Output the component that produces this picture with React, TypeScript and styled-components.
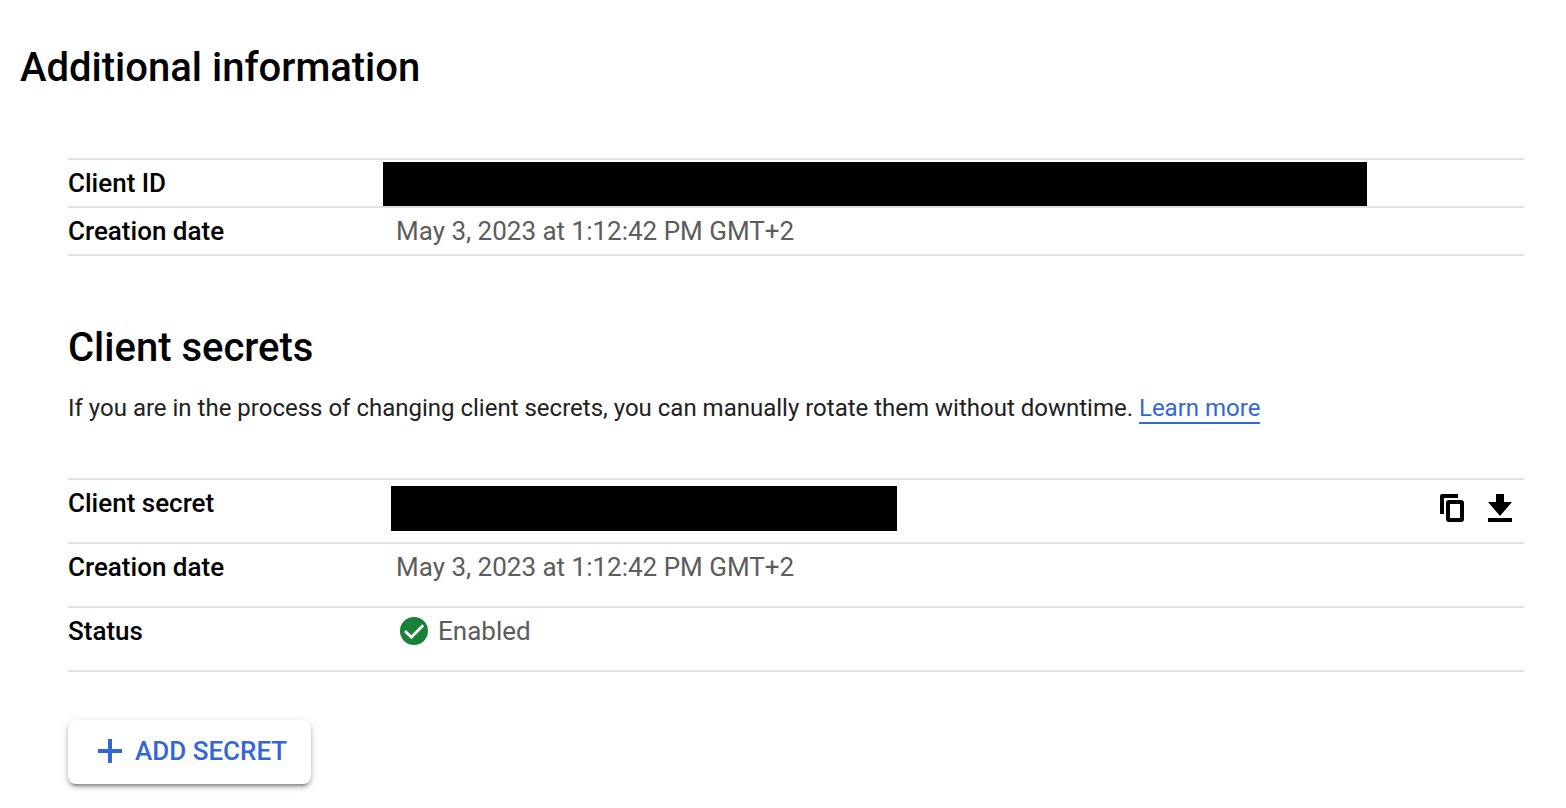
import React from "react";
import styled, { createGlobalStyle } from "styled-components";

const GlobalStyle = createGlobalStyle`
  *, *::before, *::after { box-sizing: border-box; }
  body {
    margin: 0;
    background: #fff;
    color: #000;
    font-family: Roboto, "Liberation Sans", sans-serif;
  }
`;

const Page = styled.main`
  padding: 44px 42px 24px 20px;
`;

const Title = styled.h1`
  margin: 0;
  font-size: 40px;
  font-weight: 500;
  line-height: 48px;
`;

const Details = styled.div`
  padding: 66px 0 0 48px;
`;

const Section = styled.section`
  margin-top: 68px;
`;

const SectionTitle = styled(Title).attrs({ as: "h2" })``;

const Description = styled.p`
  margin: 20px 0 54px;
  color: #212121;
  font-size: 24px;
  line-height: 32px;
`;

const Link = styled.a`
  border-bottom: 2px solid #3367d6;
  color: #3367d6;
  text-decoration: none;
`;

const Table = styled.table`
  width: 100%;
  border-spacing: 0;
  border-top: 2px solid #e0e0e0;
  table-layout: fixed;
  font-size: 26px;
  line-height: 32px;
`;

const Label = styled.th<{ $roomy?: boolean }>`
  width: 315px;
  height: ${(p) => (p.$roomy ? 64 : 48)}px;
  padding: 7px 0;
  border-bottom: 2px solid #e0e0e0;
  font-weight: 500;
  text-align: left;
  vertical-align: top;
`;

const Value = styled.td`
  padding: 7px 0 7px 13px;
  border-bottom: 2px solid #e0e0e0;
  color: #5c5c5c;
  vertical-align: top;
`;

const RedactedValue = styled(Value)<{ $inset?: boolean }>`
  padding: ${(p) => (p.$inset ? "6px 8px" : "2px 0 0")};
`;

const RedactedRow = styled.div`
  display: flex;
  align-items: flex-start;
  justify-content: space-between;
`;

const Redaction = styled.div<{ $width: number; $height: number }>`
  width: ${(p) => p.$width}px;
  max-width: 100%;
  height: ${(p) => p.$height}px;
  background: #000;
`;

const Actions = styled.div`
  display: flex;
  padding-top: 4px;
`;

const IconButton = styled.button`
  display: grid;
  place-items: center;
  width: 48px;
  height: 36px;
  padding: 0;
  border: 0;
  background: none;
  color: #000;
  cursor: pointer;

  &:last-child { margin-right: -8px; }
`;

const Status = styled.div`
  display: flex;
  align-items: center;
  gap: 10px;
  padding-left: 4px;
`;

const AddButton = styled.button`
  display: inline-flex;
  align-items: center;
  gap: 13px;
  height: 64px;
  margin-top: 48px;
  padding: 0 24px 2px 30px;
  border: 0;
  border-radius: 8px;
  background: #fff;
  box-shadow: 0 6px 2px -4px rgba(0, 0, 0, 0.2), 0 3px 4px rgba(0, 0, 0, 0.24), 0 2px 10px rgba(0, 0, 0, 0.12);
  color: #3367d6;
  font: 500 26px/32px Roboto, "Liberation Sans", sans-serif;
  cursor: pointer;
`;

const CopyIcon = () => (
  <svg width="24" height="28" viewBox="0 0 24 28" fill="none" stroke="currentColor" strokeWidth="4" aria-hidden="true">
    <path d="M0 20V2Q0 0 2 0H18V4H4V20Z" fill="currentColor" stroke="none" />
    <rect x="8" y="8" width="14" height="18" rx="1" />
  </svg>
);

const DownloadIcon = () => (
  <svg width="24" height="28" viewBox="0 0 24 28" fill="currentColor" aria-hidden="true">
    <path d="M8 0H16V8H24L12 22L0 8H8ZM0 24H24V28H0Z" />
  </svg>
);

const CheckIcon = () => (
  <svg width="28" height="28" viewBox="0 0 28 28" aria-hidden="true">
    <circle cx="14" cy="14" r="14" fill="#188038" />
    <path d="M5 14L11.3 20.2L23.2 8.2" fill="none" stroke="#fff" strokeWidth="2.8" />
  </svg>
);

const PlusIcon = () => (
  <svg width="24" height="24" viewBox="0 0 24 24" fill="currentColor" aria-hidden="true">
    <path d="M10 0H14V10H24V14H14V24H10V14H0V10H10Z" />
  </svg>
);

const created = "May 3, 2023 at 1:12:42 PM GMT+2";

export default function App() {
  return (
    <>
      <GlobalStyle />
      <Page>
        <Title>Additional information</Title>
        <Details>
          <Table>
            <tbody>
              <tr>
                <Label scope="row">Client ID</Label>
                <RedactedValue>
                  <Redaction $width={984} $height={44} />
                </RedactedValue>
              </tr>
              <tr>
                <Label scope="row">Creation date</Label>
                <Value>{created}</Value>
              </tr>
            </tbody>
          </Table>

          <Section>
            <SectionTitle>Client secrets</SectionTitle>
            <Description>
              If you are in the process of changing client secrets, you can manually rotate them without downtime.{" "}
              <Link href="#learn-more">Learn more</Link>
            </Description>
            <Table>
              <tbody>
                <tr>
                  <Label scope="row" $roomy>Client secret</Label>
                  <RedactedValue $inset>
                    <RedactedRow>
                      <Redaction $width={506} $height={45} />
                      <Actions>
                        <IconButton type="button" aria-label="Copy client secret"><CopyIcon /></IconButton>
                        <IconButton type="button" aria-label="Download client secret"><DownloadIcon /></IconButton>
                      </Actions>
                    </RedactedRow>
                  </RedactedValue>
                </tr>
                <tr>
                  <Label scope="row" $roomy>Creation date</Label>
                  <Value>{created}</Value>
                </tr>
                <tr>
                  <Label scope="row" $roomy>Status</Label>
                  <Value>
                    <Status><CheckIcon />Enabled</Status>
                  </Value>
                </tr>
              </tbody>
            </Table>
            <AddButton type="button"><PlusIcon />ADD SECRET</AddButton>
          </Section>
        </Details>
      </Page>
    </>
  );
}
